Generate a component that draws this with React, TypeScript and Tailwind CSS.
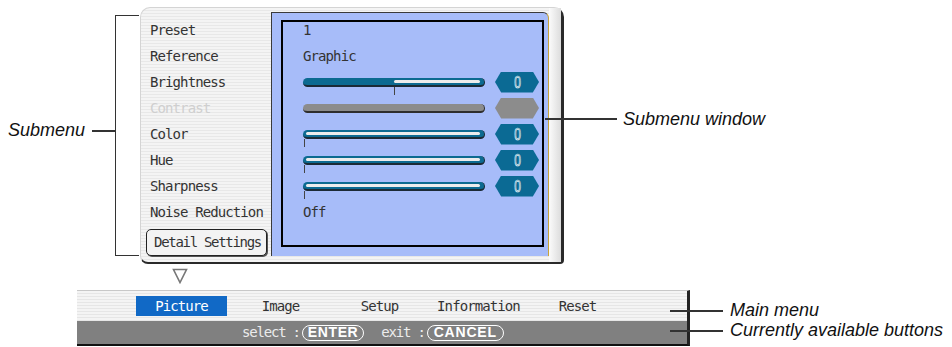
import React from "react";

const uiFont = "font-['DejaVu_Sans_Mono','Liberation_Mono',monospace]";
const noteFont = "font-['Liberation_Sans',Arial,sans-serif] italic text-[18px] leading-[22px] text-[#111]";

type Row = { label: string; kind: "text" | "slider" | "off"; value?: string; fill?: number; tick?: number };

const rows: Row[] = [
    { label: "Preset", kind: "text", value: "1" },
    { label: "Reference", kind: "text", value: "Graphic" },
    { label: "Brightness", kind: "slider", fill: 88, tick: 91 },
    { label: "Contrast", kind: "off" },
    { label: "Color", kind: "slider", fill: 0, tick: 1 },
    { label: "Hue", kind: "slider", fill: 0, tick: 1 },
    { label: "Sharpness", kind: "slider", fill: 0, tick: 1 },
    { label: "Noise Reduction", kind: "text", value: "Off" },
];

function Slider({ fill, tick }: { fill: number; tick: number }) {
    return (
        <div className="relative w-[182px]">
            <div className="h-[9px] rounded-full bg-[#0c6a91] border-b-2 border-r border-[#1b2a36] flex items-center pl-[3px] pr-[4px]">
                <div style={{ width: fill }} />
                <div className="flex-1 h-[3px] rounded-full bg-[#ececec]" />
            </div>
            <div className="absolute top-[9px] w-px h-[8px] bg-[#444]" style={{ left: tick }} />
        </div>
    );
}

function ValuePill({ off }: { off?: boolean }) {
    return (
        <div
            className={
                off
                    ? "w-[44px] h-[21px] bg-[#8c8c8c] [clip-path:polygon(14%_0,86%_0,100%_50%,86%_100%,14%_100%,0_50%)]"
                    : "w-[44px] h-[21px] bg-[#0b6a94] [clip-path:polygon(14%_0,86%_0,100%_50%,86%_100%,14%_100%,0_50%)] flex items-center justify-center"
            }
        >
            {!off && (
                <span className="font-['Liberation_Sans',Arial,sans-serif] text-[17px] leading-none scale-x-[0.7] text-transparent [-webkit-text-stroke:0.7px_#ffffff]">
                    0
                </span>
            )}
        </div>
    );
}

export default function App() {
    return (
        <div className={`relative w-[952px] h-[347px] bg-white overflow-hidden flex flex-col ${uiFont}`}>
            {/* projector menu window */}
            <div className="ml-[140px] mt-[7px] w-[424px] h-[257px] flex rounded-tl-[10px] rounded-tr-[10px] rounded-bl-[8px] rounded-br-[4px] border-l border-t border-[#d4d4d4] border-r-[3px] border-b-2 border-r-[#2a2a2a] border-b-[#2a2a2a] bg-[repeating-linear-gradient(180deg,#f4f4f4_0px,#f4f4f4_2px,#e8e8e8_2px,#e8e8e8_3px)]">
                <div className="w-[130px] pt-[9px] flex flex-col">
                    {rows.map((r) => (
                        <div
                            key={r.label}
                            className={
                                r.kind === "off"
                                    ? "h-[26px] flex items-center pl-[9px] text-[14px] tracking-[-0.9px] whitespace-nowrap text-[#cfcfcf]"
                                    : "h-[26px] flex items-center pl-[9px] text-[14px] tracking-[-0.9px] whitespace-nowrap text-[#333]"
                            }
                        >
                            {r.label}
                        </div>
                    ))}
                    <div className="mt-[4px] ml-[5px] w-[121px] h-[27px] flex items-center pl-[7px] rounded-[5px] border-[1.5px] border-[#222] bg-[#f3f3f3] shadow-[1px_1px_0_#555] text-[14px] tracking-[-1.3px] whitespace-nowrap text-[#333]">
                        Detail Settings
                    </div>
                </div>

                <div className="mt-[4px] w-[278px] h-[244px] bg-[#a7bcf9] border-l border-t border-[#3a3a3a] border-r border-r-[#c9a43a] rounded-tr-[6px] pl-[9px] pt-[7px]">
                    <div className="w-[263px] h-[227px] border-2 border-black pl-[20px]">
                        <div className="-mt-[5px] flex flex-col">
                            {rows.map((r) => (
                                <div key={r.label} className="h-[26px] flex items-center text-[14px] tracking-[-0.9px] text-[#333]">
                                    {r.kind === "text" && <span>{r.value}</span>}
                                    {r.kind === "slider" && (
                                        <div className="flex items-center gap-[10px]">
                                            <Slider fill={r.fill ?? 0} tick={r.tick ?? 1} />
                                            <ValuePill />
                                        </div>
                                    )}
                                    {r.kind === "off" && (
                                        <div className="flex items-center gap-[10px]">
                                            <div className="w-[182px] h-[9px] rounded-full bg-[#8c8c8c] border-b-2 border-r border-[#2e2e2e]" />
                                            <ValuePill off />
                                        </div>
                                    )}
                                </div>
                            ))}
                        </div>
                    </div>
                </div>

                <div className="flex-1 bg-[linear-gradient(90deg,#fbfbfb,#dcdcdc)]" />
            </div>

            {/* down arrow */}
            <svg className="ml-[172px] mt-[4px]" width="16" height="16" viewBox="0 0 16 16">
                <polygon points="1.5,1.5 14.5,1.5 8,14.5" fill="white" stroke="#777" strokeWidth="1.6" />
            </svg>

            {/* main menu bar */}
            <div className="ml-[77px] mt-[6px] w-[613px] flex flex-col border-t border-[#c8c8c8] border-r-[3px] border-r-[#222] border-b-2 border-b-[#111]">
                <div className="h-[30px] flex items-center pl-[55px] bg-[repeating-linear-gradient(180deg,#f4f4f4_0px,#f4f4f4_2px,#e6e6e6_2px,#e6e6e6_3px)] text-[14px] tracking-[-0.9px] text-[#333]">
                    {["Picture", "Image", "Setup", "Information", "Reset"].map((m) => (
                        <div key={m} className="w-[99px] flex justify-center">
                            {m === "Picture" ? (
                                <span className="w-[91px] h-[20px] flex items-center justify-center bg-[#1169c6] text-white">{m}</span>
                            ) : (
                                <span>{m}</span>
                            )}
                        </div>
                    ))}
                </div>
                <div className="h-[23px] bg-[#808080] flex items-center pl-[165px] text-[14px] tracking-[-1.2px] text-[#ececec]">
                    <span>select :</span>
                    <span className="ml-[2px] px-[5px] h-[16px] flex items-center rounded-full border-[1.5px] border-white font-['Liberation_Sans',Arial,sans-serif] font-bold text-[14px] text-white tracking-[0.6px]">
                        ENTER
                    </span>
                    <span className="ml-[17px]">exit :</span>
                    <span className="ml-[2px] px-[6px] h-[16px] flex items-center rounded-full border-[1.5px] border-white font-['Liberation_Sans',Arial,sans-serif] font-bold text-[14px] text-white tracking-[0.8px]">
                        CANCEL
                    </span>
                </div>
            </div>

            {/* callouts */}
            <div className={`absolute left-[8px] top-[119px] ${noteFont}`}>Submenu</div>
            <div className="absolute left-[92px] top-[130px] w-[23px] h-[1.5px] bg-[#333]" />
            <div className="absolute left-[115px] top-[15px] w-[24px] h-[241px] border-l-[1.5px] border-t-[1.5px] border-b-[1.5px] border-[#333]" />

            <div className="absolute left-[545px] top-[118px] w-[72px] h-[1.5px] bg-[#333]" />
            <div className={`absolute left-[623px] top-[108px] ${noteFont}`}>Submenu window</div>

            <div className="absolute left-[670px] top-[310px] w-[53px] h-[1.5px] bg-[#333]" />
            <div className={`absolute left-[730px] top-[299px] ${noteFont}`}>Main menu</div>
            <div className="absolute left-[670px] top-[330px] w-[53px] h-[1.5px] bg-[#333]" />
            <div className={`absolute left-[730px] top-[319px] ${noteFont}`}>Currently available buttons</div>
        </div>
    );
}
